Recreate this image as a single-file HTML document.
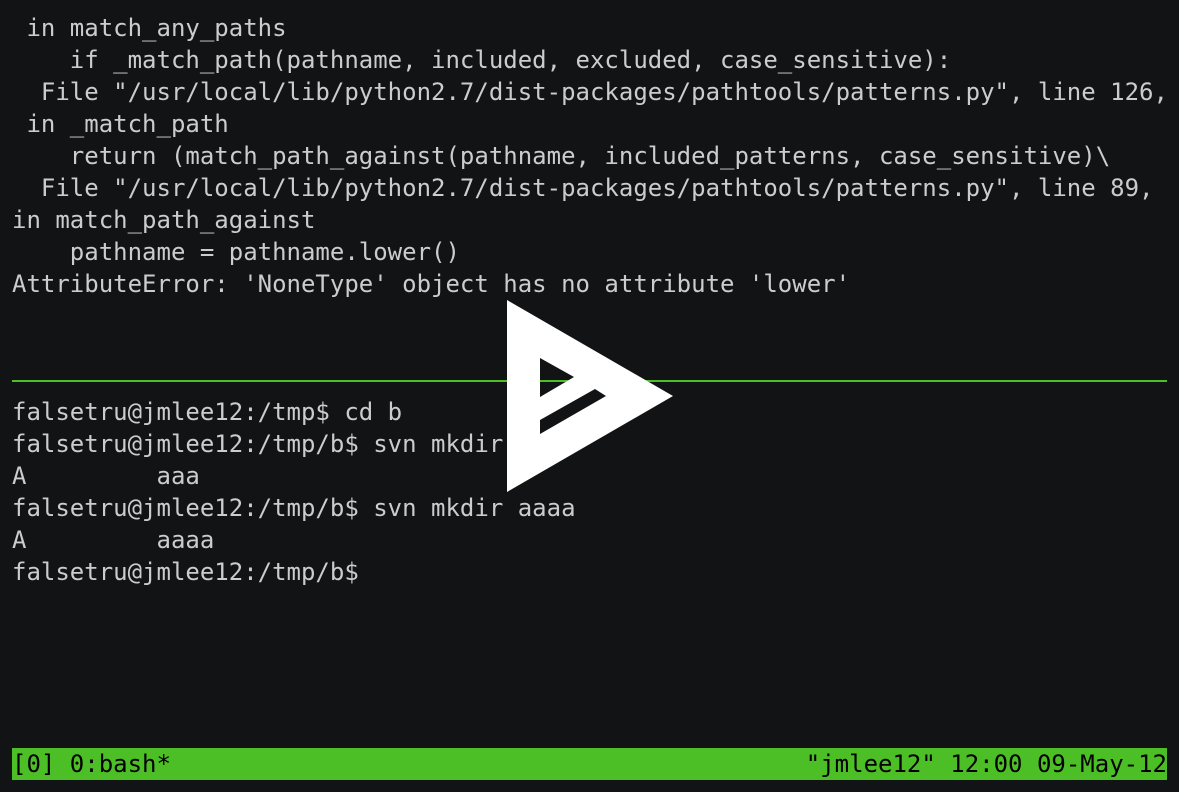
<!DOCTYPE html>
<html><head><meta charset="utf-8"><style>
html,body{margin:0;padding:0;background:#121314;width:1179px;height:792px;overflow:hidden}
pre{position:absolute;left:12px;top:12px;margin:0;font-family:"DejaVu Sans Mono","Liberation Mono",monospace;font-size:24px;line-height:32px;color:#cccccc;white-space:pre}
.hr{position:absolute;left:12px;top:380px;width:1155px;height:2px;background:#4dbf26}
.bar{position:absolute;left:12px;top:748px;width:1155px;height:32px;background:#4dbf26;font-family:"DejaVu Sans Mono","Liberation Mono",monospace;font-size:24px;line-height:32px;color:#000;white-space:pre}
.bar span{position:absolute;right:0;top:0}
svg{position:absolute;left:0;top:0}
</style></head><body>
<pre> in match_any_paths
    if _match_path(pathname, included, excluded, case_sensitive):
  File "/usr/local/lib/python2.7/dist-packages/pathtools/patterns.py", line 126,
 in _match_path
    return (match_path_against(pathname, included_patterns, case_sensitive)\
  File "/usr/local/lib/python2.7/dist-packages/pathtools/patterns.py", line 89,
in match_path_against
    pathname = pathname.lower()
AttributeError: 'NoneType' object has no attribute 'lower'



falsetru@jmlee12:/tmp$ cd b
falsetru@jmlee12:/tmp/b$ svn mkdir aaa
A         aaa
falsetru@jmlee12:/tmp/b$ svn mkdir aaaa
A         aaaa
falsetru@jmlee12:/tmp/b$</pre>
<div class="hr"></div>
<div class="bar">[0] 0:bash*<span>"jmlee12" 12:00 09-May-12</span></div>
<svg width="1179" height="792"><path fill="#fff" fill-rule="evenodd" d="M507 300 L673 396 L507 492 Z M540 358 L540 397 L574 377 Z M595 389 L606 396 L540 434 L540 420 Z"/></svg>
</body></html>
